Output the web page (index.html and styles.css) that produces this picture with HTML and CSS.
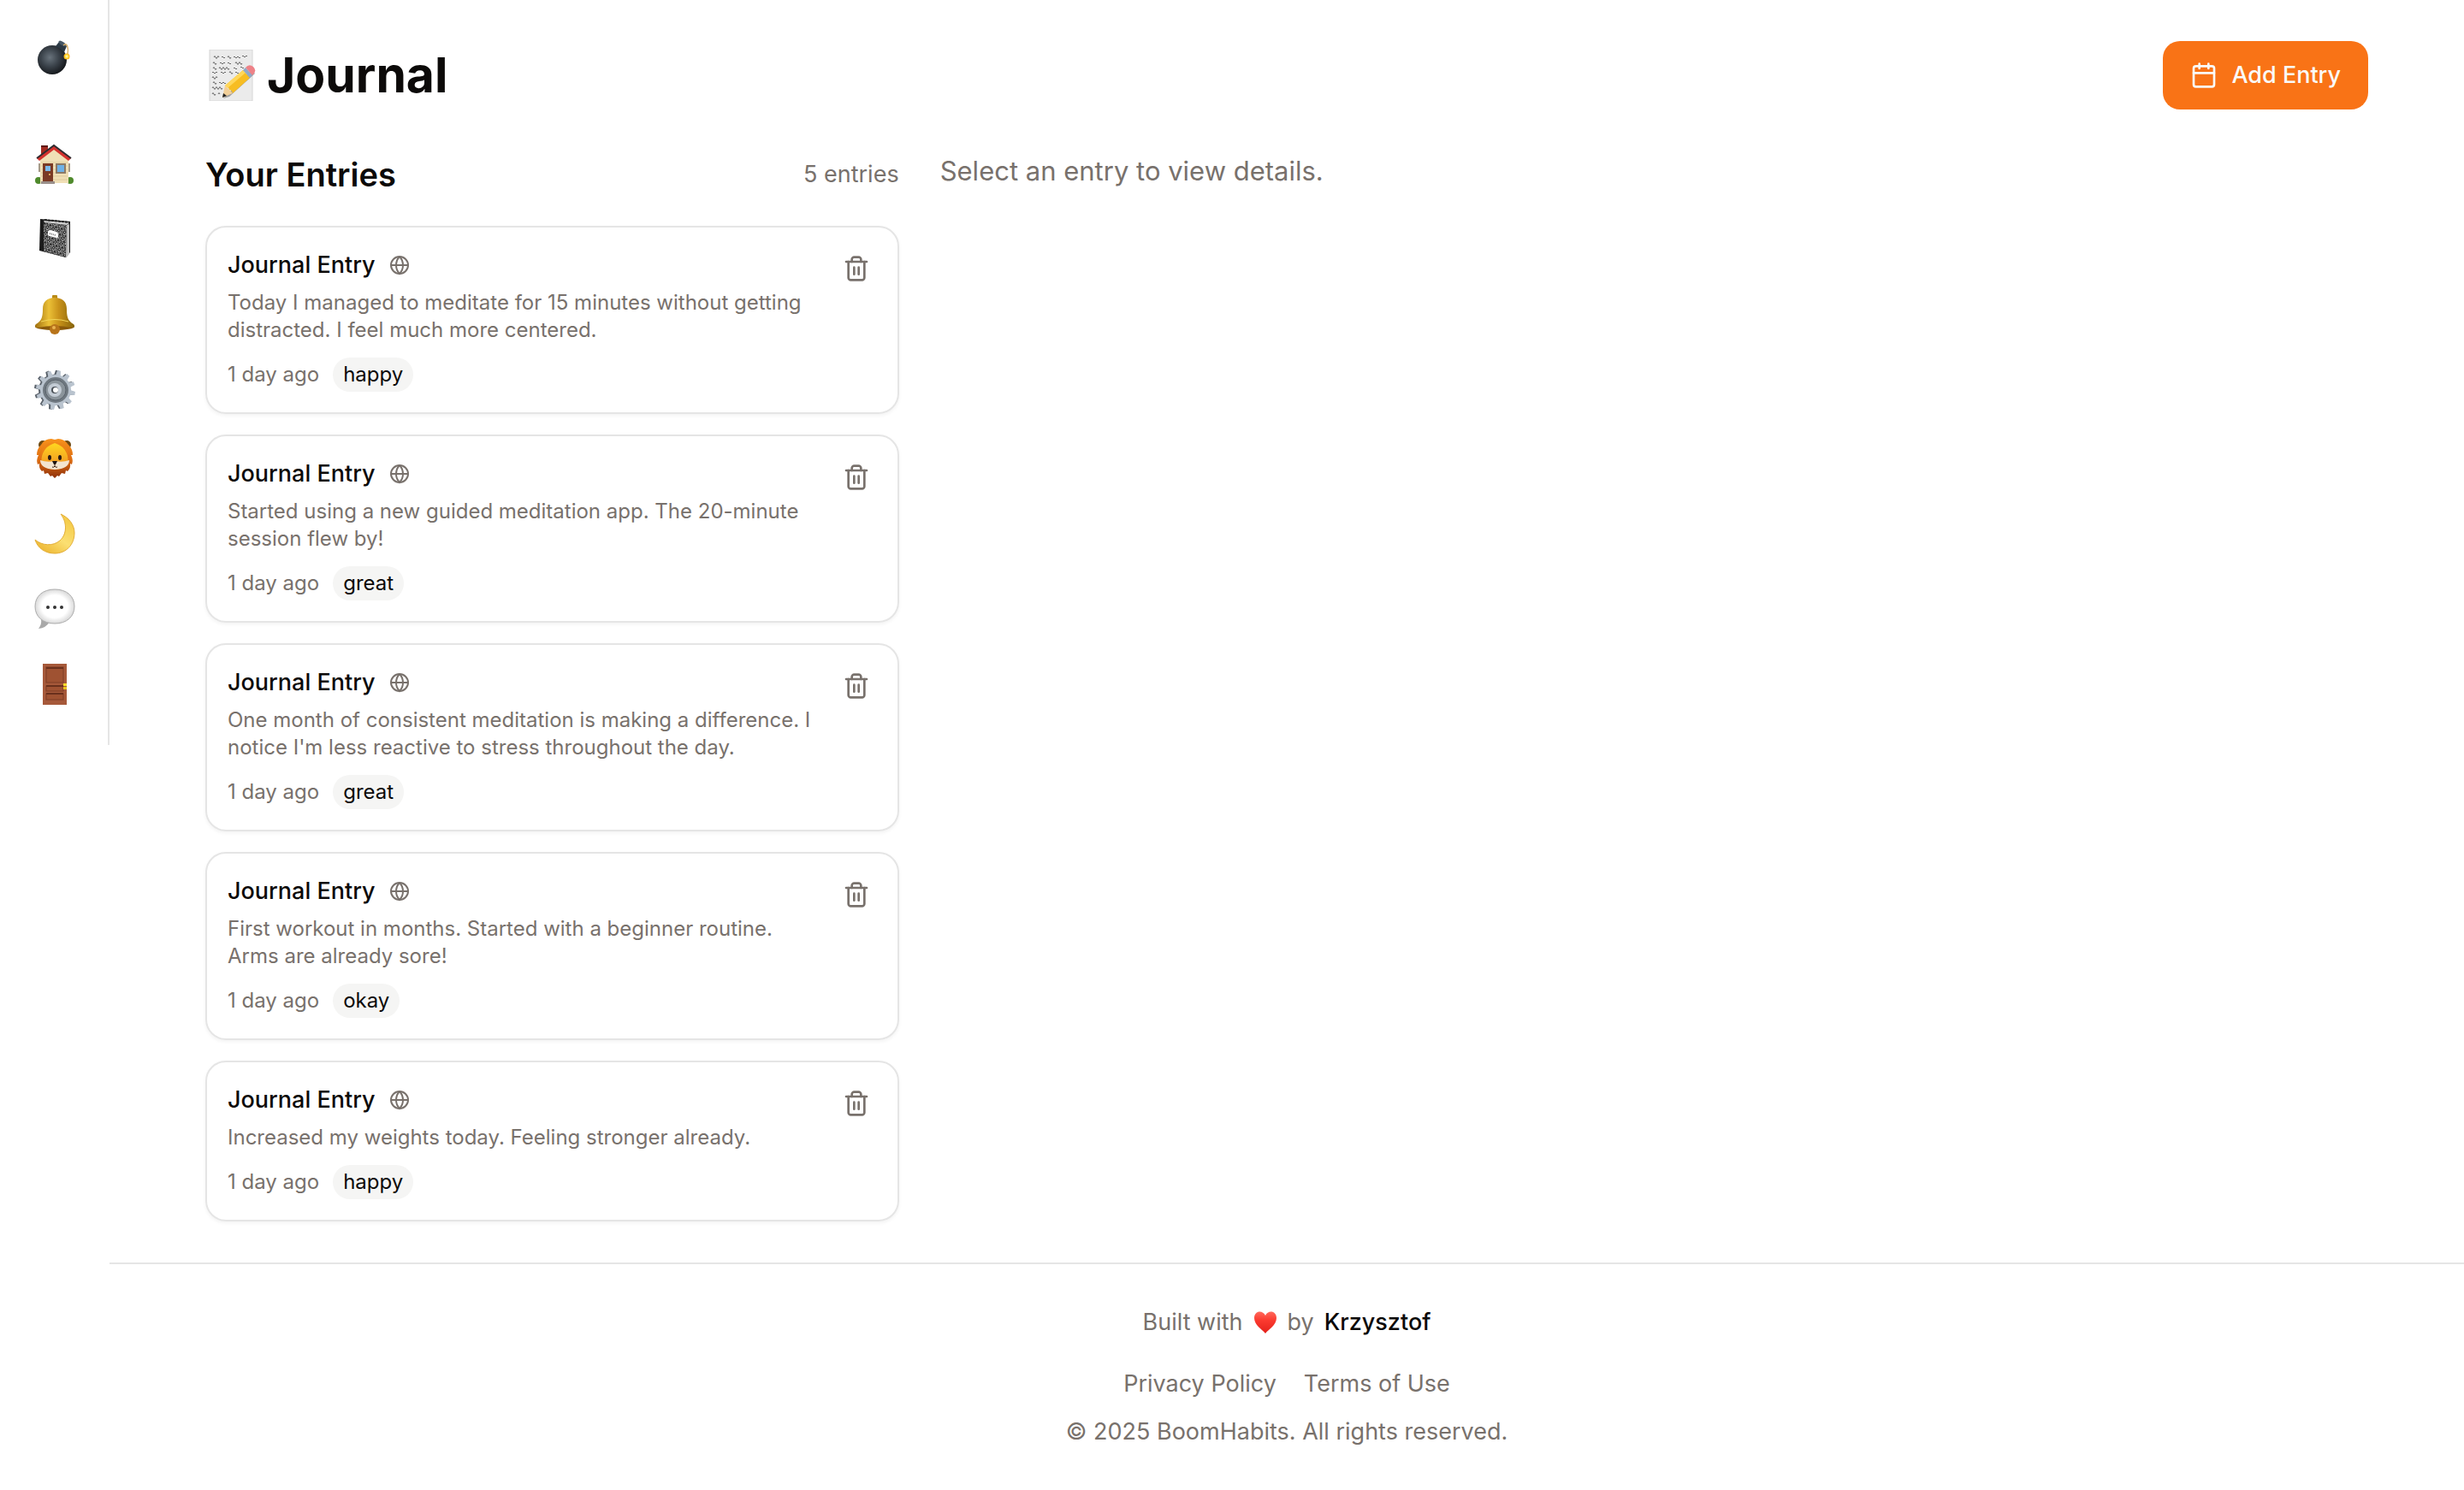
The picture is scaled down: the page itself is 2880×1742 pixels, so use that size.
FILE: index.html
```html
<!DOCTYPE html>
<html lang="en">
<head>
    <meta charset="UTF-8">
    <title>Journal - BoomHabits</title>
    <link rel="stylesheet" href="styles.css">
</head>
<body>

    <!-- Shared icons -->
    <svg class="sprite" aria-hidden="true">
        <symbol id="globe" viewBox="0 0 24 24">
            <circle cx="12" cy="12" r="10"/>
            <path d="M12 2a14.5 14.5 0 0 0 0 20 14.5 14.5 0 0 0 0-20"/>
            <path d="M2 12h20"/>
        </symbol>
        <symbol id="trash" viewBox="0 0 24 24">
            <path d="M3 6h18"/>
            <path d="M19 6v14c0 1-1 2-2 2H7c-1 0-2-1-2-2V6"/>
            <path d="M8 6V4c0-1 1-2 2-2h4c1 0 2 1 2 2v2"/>
            <path d="M10 11v6"/>
            <path d="M14 11v6"/>
        </symbol>
    </svg>

    <nav class="sidebar" aria-label="Main">
        <a class="logo" href="#" aria-label="BoomHabits">
            <svg class="emoji" viewBox="0 0 48 48">
                <defs>
                    <radialGradient id="bombFill" cx="0.42" cy="0.42" r="0.6">
                        <stop offset="0" stop-color="#69737c"/>
                        <stop offset="0.5" stop-color="#3c444c"/>
                        <stop offset="1" stop-color="#15181c"/>
                    </radialGradient>
                    <radialGradient id="spark">
                        <stop offset="0" stop-color="#fffbd0"/>
                        <stop offset="0.6" stop-color="#ffd92e"/>
                        <stop offset="1" stop-color="#f9a513"/>
                    </radialGradient>
                </defs>
                <circle cx="21" cy="26" r="17" fill="url(#bombFill)"/>
                <path d="M25 10l4-5q5 0 9 5l-3 7q-5-5-10-7z" fill="#2c3944"/>
                <ellipse cx="33" cy="7" rx="5" ry="2" transform="rotate(35 33 7)" fill="#465765"/>
                <path d="M34 9q4-3 5 2 1 3 0 8" fill="none" stroke="#d9b06a" stroke-width="1.5"/>
                <circle cx="38" cy="22" r="3.5" fill="url(#spark)"/>
            </svg>
        </a>
        <a href="#" aria-label="Home">
            <svg class="emoji" viewBox="0 0 48 48">
                <rect x="8" y="2" width="8" height="14" fill="#a32b22"/>
                <rect x="8" y="2" width="8" height="2" fill="#5d1a17"/>
                <circle cx="5" cy="43" r="4" fill="#4f8a2c"/>
                <circle cx="42" cy="43" r="4" fill="#4f8a2c"/>
                <path d="M7 46V18L23 5l17 13v28z" fill="#f0dfb6"/>
                <path d="M8 22h31M8 26h31M8 30h31M8 34h31M8 38h31M8 42h31" stroke="#e0cc9d"/>
                <path d="M23 2L3 17l3 3L23 7l17 13 3-3z" fill="#d4322e"/>
                <path d="M3 17L23 2l20 15" fill="none" stroke="#2e2c30" stroke-width="2"/>
                <rect x="10" y="23" width="12" height="22" fill="#7b3a25"/>
                <rect x="13" y="26" width="6" height="6" fill="#7cb9ea"/>
                <circle cx="18" cy="36" r="1" fill="#f3c56d"/>
                <rect x="8" y="44" width="16" height="3" fill="#9a8f8a"/>
                <rect x="25" y="23" width="12" height="12" fill="#8d7a66"/>
                <rect x="27" y="25" width="8" height="8" fill="#6fb1e6"/>
                <path d="M6 23v10M41 23v10" stroke="#a59a88" stroke-width="2"/>
            </svg>
        </a>
        <a href="#" aria-label="Journal">
            <svg class="emoji" viewBox="0 0 48 48">
                <defs>
                    <!-- Marbled notebook cover -->
                    <pattern id="marble" width="7" height="7" patternUnits="userSpaceOnUse" patternTransform="rotate(17)">
                        <rect width="7" height="7" fill="#4a4a4a"/>
                        <path d="M0 0h1v1H0zM3 0h2v1H3zM1 2h1v2H1zM4 2h1v1H4zM6 3h1v1H6zM3 4h1v1H3zM0 5h1v1H0zM5 5h1v2H5zM2 6h1v1H2z" fill="#c4c4c4"/>
                        <path d="M2 0h1v1H2zM5 1h2v1H5zM2 3h1v1H2zM4 3h1v1H4zM1 5h1v1H1zM4 6h1v1H4z" fill="#151515"/>
                    </pattern>
                </defs>
                <path d="M7 0l35 3v36l-5 6L6 37z" fill="#1b1b1b"/>
                <path d="M11 4l27 3-1 38-26-7z" fill="url(#marble)"/>
                <path d="M38 7l3-1v35l-4 4z" fill="#bdbdbd"/>
                <path d="M11 2l31 2-4 3-26-3z" fill="#cfcfcf"/>
                <path d="M12 1l30 3" stroke="#222" stroke-width="2" stroke-dasharray="3 1"/>
                <path d="M19 13l7 2q2 1 2 3l0 2q0 3-2 2l-8-2q-2 0-2-2v-3q0-2 3-2z" fill="#fff"/>
                <path d="M18 17l7 2" stroke="#777" stroke-width="2" stroke-dasharray="1 1"/>
            </svg>
        </a>
        <a href="#" aria-label="Reminders">
            <svg class="emoji" viewBox="0 0 48 48">
                <defs>
                    <linearGradient id="bellFill">
                        <stop offset="0" stop-color="#a07010"/>
                        <stop offset="0.35" stop-color="#ebc036"/>
                        <stop offset="0.6" stop-color="#c9921a"/>
                        <stop offset="1" stop-color="#86640a"/>
                    </linearGradient>
                </defs>
                <rect x="21" y="1" width="6" height="5" rx="1" fill="#b98b17"/>
                <ellipse cx="24" cy="38" rx="23" ry="4" fill="#8a5a0a"/>
                <path d="M24 4c9 0 14 5 14 13 0 9 1 14 8 18 2 2 1 4-2 4q-20-4-40 0c-3 0-4-2-2-4 7-4 8-9 8-18C10 9 15 4 24 4z" fill="url(#bellFill)"/>
                <path d="M8 32q16-5 32 0" fill="none" stroke="#f3d75a" stroke-width="1"/>
                <circle cx="24" cy="41" r="6" fill="#b8741a"/>
                <circle cx="23" cy="39" r="2" fill="#eab450"/>
            </svg>
        </a>
        <a href="#" aria-label="Settings">
            <svg class="emoji" viewBox="0 0 48 48">
                <g fill="#59616a" transform="rotate(10 24 24) translate(-1 0)">
                    <circle cx="24" cy="24" r="18"/>
                    <path id="tooth" d="M21 8l1-7h4l1 7z"/>
                    <use href="#tooth" transform="rotate(30 24 24)"/>
                    <use href="#tooth" transform="rotate(60 24 24)"/>
                    <use href="#tooth" transform="rotate(90 24 24)"/>
                    <use href="#tooth" transform="rotate(120 24 24)"/>
                    <use href="#tooth" transform="rotate(150 24 24)"/>
                    <use href="#tooth" transform="rotate(180 24 24)"/>
                    <use href="#tooth" transform="rotate(210 24 24)"/>
                    <use href="#tooth" transform="rotate(240 24 24)"/>
                    <use href="#tooth" transform="rotate(270 24 24)"/>
                    <use href="#tooth" transform="rotate(300 24 24)"/>
                    <use href="#tooth" transform="rotate(330 24 24)"/>
                </g>
                <g fill="#b9c3ce" transform="rotate(10 25 24)">
                    <circle cx="25" cy="24" r="18"/>
                    <path id="cog" d="M22 8l1-7h4l1 7z"/>
                    <use href="#cog" transform="rotate(30 25 24)"/>
                    <use href="#cog" transform="rotate(60 25 24)"/>
                    <use href="#cog" transform="rotate(90 25 24)"/>
                    <use href="#cog" transform="rotate(120 25 24)"/>
                    <use href="#cog" transform="rotate(150 25 24)"/>
                    <use href="#cog" transform="rotate(180 25 24)"/>
                    <use href="#cog" transform="rotate(210 25 24)"/>
                    <use href="#cog" transform="rotate(240 25 24)"/>
                    <use href="#cog" transform="rotate(270 25 24)"/>
                    <use href="#cog" transform="rotate(300 25 24)"/>
                    <use href="#cog" transform="rotate(330 25 24)"/>
                </g>
                <circle cx="25" cy="24" r="15" fill="#6f7880"/>
                <circle cx="25" cy="24" r="12" fill="#8b949b" stroke="#59616a"/>
                <circle cx="24" cy="24" r="8" fill="#c3cbd4"/>
                <circle cx="24" cy="24" r="4" fill="#4a5158"/>
                <circle cx="25" cy="24" r="3" fill="#fff"/>
            </svg>
        </a>
        <a class="tight" href="#" aria-label="Profile">
            <svg class="emoji" viewBox="0 0 48 48">
                <defs>
                    <linearGradient id="mane" x2="0" y2="1">
                        <stop offset="0" stop-color="#f8921c"/>
                        <stop offset="0.55" stop-color="#dc6c12"/>
                        <stop offset="1" stop-color="#8e300b"/>
                    </linearGradient>
                    <linearGradient id="face" x2="0" y2="1">
                        <stop offset="0" stop-color="#ffd81f"/>
                        <stop offset="1" stop-color="#f08a24"/>
                    </linearGradient>
                </defs>
                <circle cx="10" cy="8" r="5" fill="#6e4a12"/>
                <circle cx="38" cy="8" r="5" fill="#6e4a12"/>
                <path d="M24 2l4-1q7 0 12 7 5 5 5 12l-2 0q3 6 1 11l-2-1q1 5-3 9l-2-1-1 4-4-1-3 4-2-1-3 3-3-3-2 1-3-4-4 1-1-4-2 1q-4-4-3-9l-2 1q-2-5 1-11l-2 0q0-7 5-12 4-7 12-7z" fill="url(#mane)"/>
                <path d="M24 6q-10 3-14 12-3 7 0 13 5 6 14 6t14-6q3-6 0-13Q34 9 24 6z" fill="url(#face)"/>
                <path d="M7 26q8 3 17 1 9 2 17-1 0 10-17 11Q7 36 7 26z" fill="#f3e4cf"/>
                <path d="M24 5q-8 2-12 8-3 4-4 8 1-9 7-14zM24 5q8 2 12 8 3 4 4 8-1-9-7-14z" fill="#ee8515"/>
                <ellipse cx="18" cy="23" rx="2" ry="3" fill="#2b1a12"/>
                <ellipse cx="30" cy="23" rx="2" ry="3" fill="#2b1a12"/>
                <path d="M21 27h6l-2 4h-2z" fill="#1d1512"/>
                <path d="M24 30v3m-3 1q2 1 3-1 1 2 3 1" fill="none" stroke="#3c2517"/>
            </svg>
        </a>
        <a href="#" aria-label="Dark mode">
            <svg class="emoji" viewBox="0 0 48 48">
                <defs>
                    <linearGradient id="moonFill" x1="1" y1="0" x2="0.3" y2="1">
                        <stop offset="0" stop-color="#f2c43a"/>
                        <stop offset="0.6" stop-color="#fbdf72"/>
                        <stop offset="1" stop-color="#eeb936"/>
                    </linearGradient>
                </defs>
                <path d="M31 1c9 4 16 12 16 22 0 14-10 24-23 24C13 47 4 41 1 31c8 7 21 8 29 1 9-8 8-22 1-31z" fill="url(#moonFill)" stroke="#e3ad36" stroke-width="1"/>
            </svg>
        </a>
        <a href="#" aria-label="Feedback">
            <svg class="emoji" viewBox="0 0 48 48">
                <defs>
                    <radialGradient id="bubble" cx="0.5" cy="0.5" r="0.55">
                        <stop offset="0.6" stop-color="#ffffff"/>
                        <stop offset="1" stop-color="#cfcfcf"/>
                    </radialGradient>
                </defs>
                <path d="M8 36q1 6-3 11 9-1 13-8z" fill="#a9a9a9"/>
                <path d="M24 1c14 0 23 8 23 20s-9 20-23 20S1 33 1 21 10 1 24 1z" fill="url(#bubble)" stroke="#adadad" stroke-width="1"/>
                <circle cx="16" cy="22" r="2" fill="#333"/>
                <circle cx="24" cy="22" r="2" fill="#333"/>
                <circle cx="32" cy="22" r="2" fill="#333"/>
            </svg>
        </a>
        <a href="#" aria-label="Log out">
            <svg class="emoji" viewBox="0 0 48 48">
                <rect x="10" y="0" width="28" height="48" fill="#a6593a"/>
                <rect x="14" y="4" width="20" height="18" fill="#9f5232" stroke="#7d3d25"/>
                <rect x="14" y="26" width="20" height="6" fill="#9f5232" stroke="#7d3d25"/>
                <rect x="14" y="35" width="20" height="7" fill="#9f5232" stroke="#7d3d25"/>
                <path d="M14 5h20M14 26h20M14 35h20" stroke="#6a301c" stroke-width="2"/>
                <rect x="34" y="23" width="4" height="3" fill="#f8dc2a"/>
                <rect x="34" y="27" width="4" height="3" fill="#e9c41c"/>
            </svg>
        </a>
    </nav>

    <div class="page">
        <main>
            <header class="page-header">
                <h1>
                    <svg class="memo" viewBox="0 0 60 60" aria-hidden="true">
                        <rect x="5" y="0" width="50" height="60" fill="#ebebeb" stroke="#d6d6d6"/>
                        <!-- Handwritten lines -->
                        <g fill="none" stroke="#6a6a6a" stroke-width="1">
                            <path d="M10 9q1-3 2 0t2 0 2 0M19 9q1-2 2 0t2 0M26 9q1-3 2 0t2 0M33 9q1-2 2 0t2 0 2 0 2 0M43 8q1-2 2 0t2 0 2 0"/>
                            <path d="M9 16q1-3 2 0t2 0M17 16q1-2 2 0t2 0 2 0M26 16q1-2 2 0t2 0M35 16q1-3 2 0t2 0 2 0 2 0"/>
                            <path d="M9 22q1-3 2 0t2 0M16 22q1-3 2 0t2 0 2 0 2 0 2 0 2 0M33 22q1-2 2 0t2 0M41 21q1-2 2 0t2 0"/>
                            <path d="M8 27q1-2 2 0t2 0 2 0M18 27q1-2 2 0t2 0 2 0M28 27q1-3 2 0t2 0M35 27q1-2 2 0t2 0"/>
                            <path d="M8 33q1-3 2 0t2 0 2 0"/>
                            <path d="M9 39q1-3 2 0t2 0M16 39q1-2 2 0t2 0 2 0 2 0"/>
                            <path d="M8 45q1-3 2 0t2 0 2 0 2 0 2 0 2 0"/>
                            <path d="M8 52q1-3 2 0t2 0M15 52q1-3 2 0"/>
                        </g>
                        <path d="M21 57l33-33 4 4-30 27z" fill="#555" opacity="0.5"/>
                        <path d="M20 56l3-14 9 9z" fill="#f1cf99"/>
                        <path d="M20 56l1-5 4 3z" fill="#222"/>
                        <path d="M23 42l21-18 8 9-20 18q-1-4-4-4-1-4-5-5z" fill="#f7bd22"/>
                        <path d="M23 42l21-18 3 3-21 18z" fill="#ffd75a"/>
                        <path d="M44 24l3-3 8 9-3 3z" fill="#8fa9c8"/>
                        <path d="M47 21q4-5 9-1 5 5-1 10z" fill="#ee8288"/>
                    </svg>
                    Journal
                </h1>
                <button class="add-btn" type="button">
                    <svg class="icon" viewBox="0 0 24 24" aria-hidden="true">
                        <path d="M8 2v4M16 2v4M3 10h18"/>
                        <rect x="3" y="4" width="18" height="18" rx="2"/>
                    </svg>
                    Add Entry
                </button>
            </header>

            <div class="columns">
                <section class="entries">
                    <div class="entries-header">
                        <h2>Your Entries</h2>
                        <span>5 entries</span>
                    </div>

                    <article class="card">
                        <div class="card-body">
                            <h3>Journal Entry <svg class="globe"><use href="#globe"/></svg></h3>
                            <p>Today I managed to meditate for 15 minutes without getting distracted. I feel much more centered.</p>
                            <div class="meta">1 day ago <span class="mood">happy</span></div>
                        </div>
                        <button class="delete" type="button" aria-label="Delete entry"><svg class="icon"><use href="#trash"/></svg></button>
                    </article>

                    <article class="card">
                        <div class="card-body">
                            <h3>Journal Entry <svg class="globe"><use href="#globe"/></svg></h3>
                            <p>Started using a new guided meditation app. The 20-minute session flew by!</p>
                            <div class="meta">1 day ago <span class="mood">great</span></div>
                        </div>
                        <button class="delete" type="button" aria-label="Delete entry"><svg class="icon"><use href="#trash"/></svg></button>
                    </article>

                    <article class="card">
                        <div class="card-body">
                            <h3>Journal Entry <svg class="globe"><use href="#globe"/></svg></h3>
                            <p>One month of consistent meditation is making a difference. I notice I'm less reactive to stress throughout the day.</p>
                            <div class="meta">1 day ago <span class="mood">great</span></div>
                        </div>
                        <button class="delete" type="button" aria-label="Delete entry"><svg class="icon"><use href="#trash"/></svg></button>
                    </article>

                    <article class="card">
                        <div class="card-body">
                            <h3>Journal Entry <svg class="globe"><use href="#globe"/></svg></h3>
                            <p>First workout in months. Started with a beginner routine. Arms are already sore!</p>
                            <div class="meta">1 day ago <span class="mood">okay</span></div>
                        </div>
                        <button class="delete" type="button" aria-label="Delete entry"><svg class="icon"><use href="#trash"/></svg></button>
                    </article>

                    <article class="card">
                        <div class="card-body">
                            <h3>Journal Entry <svg class="globe"><use href="#globe"/></svg></h3>
                            <p>Increased my weights today. Feeling stronger already.</p>
                            <div class="meta">1 day ago <span class="mood">happy</span></div>
                        </div>
                        <button class="delete" type="button" aria-label="Delete entry"><svg class="icon"><use href="#trash"/></svg></button>
                    </article>
                </section>

                <section class="details">
                    <p>Select an entry to view details.</p>
                </section>
            </div>
        </main>

        <footer>
            <p class="credit">
                Built with
                <svg class="heart" viewBox="0 0 28 28" role="img" aria-label="love">
                    <defs>
                        <linearGradient id="heartFill" x2="0" y2="1">
                            <stop offset="0" stop-color="#ff6a5c"/>
                            <stop offset="0.4" stop-color="#fb3a2f"/>
                            <stop offset="1" stop-color="#e3211b"/>
                        </linearGradient>
                    </defs>
                    <path d="M14 27C10 22 1 17 1 9c0-9 10-10 13-3 3-7 13-6 13 3 0 8-9 13-13 18z" fill="url(#heartFill)"/>
                </svg>
                by
                <a class="author" href="#">Krzysztof</a>
            </p>
            <div class="links">
                <a href="#">Privacy Policy</a>
                <a href="#">Terms of Use</a>
            </div>
            <p>© 2025 BoomHabits. All rights reserved.</p>
        </footer>
    </div>

</body>
</html>
```
FILE: styles.css
```css
* {
    box-sizing: border-box;
    margin: 0;
    padding: 0;
}

body {
    display: flex;
    align-items: flex-start;
    min-height: 100vh;
    font-family: Inter, "Liberation Sans", sans-serif;
    font-size: 27px;
    line-height: 40px;
    color: #0c0a09;
    background-color: #fff;
}

a {
    color: inherit;
    text-decoration: none;
}

button {
    border: none;
    background: none;
    font: inherit;
    cursor: pointer;
}

.sprite {
    display: none;
}

/* Sidebar */
.sidebar {
    display: flex;
    flex-direction: column;
    align-items: center;
    gap: 40px;
    width: 128px;
    height: 50vh;
    padding-top: 44px;
    padding-left: 2px;
    border-right: 2px solid #e5e5e5;
}

.sidebar a {
    height: 48px;
}

.sidebar .logo {
    margin-bottom: 36px;
}

.sidebar .tight {
    margin-top: -8px;
}

.emoji {
    display: block;
    width: 48px;
    height: 48px;
}

/* Main area */
.page {
    flex: 1;
    min-width: 0;
}

main {
    padding: 48px 112px;
}

.page-header {
    display: flex;
    justify-content: space-between;
    align-items: center;
    margin-bottom: 48px;
}

h1 {
    display: flex;
    align-items: center;
    gap: 12px;
    font-size: 57px;
    line-height: 72px;
}

.memo {
    width: 60px;
    height: 60px;
}

.icon {
    width: 32px;
    height: 32px;
    fill: none;
    stroke: currentColor;
    stroke-width: 2;
    stroke-linecap: round;
    stroke-linejoin: round;
}

.add-btn {
    display: flex;
    align-items: center;
    gap: 16px;
    height: 80px;
    padding: 0 32px;
    border-radius: 20px;
    background-color: #f97316;
    color: #fafaf9;
    font-weight: 500;
}

.columns {
    display: grid;
    grid-template-columns: repeat(3, 1fr);
    gap: 48px;
}

.entries {
    display: flex;
    flex-direction: column;
    gap: 24px;
}

.entries-header {
    display: flex;
    justify-content: space-between;
    align-items: center;
    margin-bottom: 8px;
    color: #78716c;
}

h2 {
    font-size: 38px;
    line-height: 56px;
    font-weight: 600;
    color: #0c0a09;
}

.details {
    grid-column: span 2;
    font-size: 31px;
    line-height: 48px;
    color: #78716c;
}

/* Entry cards */
.card {
    display: flex;
    align-items: flex-start;
    gap: 16px;
    padding: 24px;
    border: 2px solid #e5e5e5;
    border-radius: 24px;
    box-shadow: 0 2px 4px rgba(0, 0, 0, 0.05);
}

.card-body {
    flex: 1;
}

h3 {
    display: flex;
    align-items: center;
    gap: 16px;
    margin-bottom: 8px;
    font-size: 27px;
    font-weight: 500;
}

.globe {
    width: 24px;
    height: 24px;
    fill: none;
    stroke: #78716c;
    stroke-width: 2;
}

.card p {
    margin-bottom: 16px;
    font-size: 24px;
    line-height: 32px;
    color: #78716c;
}

.meta {
    display: flex;
    align-items: center;
    gap: 16px;
    font-size: 24px;
    color: #78716c;
}

.mood {
    padding: 0 12px;
    border-radius: 20px;
    background-color: #f5f5f4;
    color: #0c0a09;
}

.delete {
    display: flex;
    align-items: center;
    justify-content: center;
    width: 48px;
    height: 48px;
    color: #78716c;
}

/* Footer */
footer {
    padding: 48px;
    border-top: 2px solid #e5e5e5;
    text-align: center;
    color: #78716c;
}

.credit {
    display: flex;
    align-items: center;
    justify-content: center;
    gap: 12px;
    margin-bottom: 32px;
}

.heart {
    width: 28px;
    height: 28px;
}

.author {
    color: #0c0a09;
    font-weight: 500;
}

.links {
    display: flex;
    justify-content: center;
    gap: 32px;
    margin-bottom: 16px;
}
```
